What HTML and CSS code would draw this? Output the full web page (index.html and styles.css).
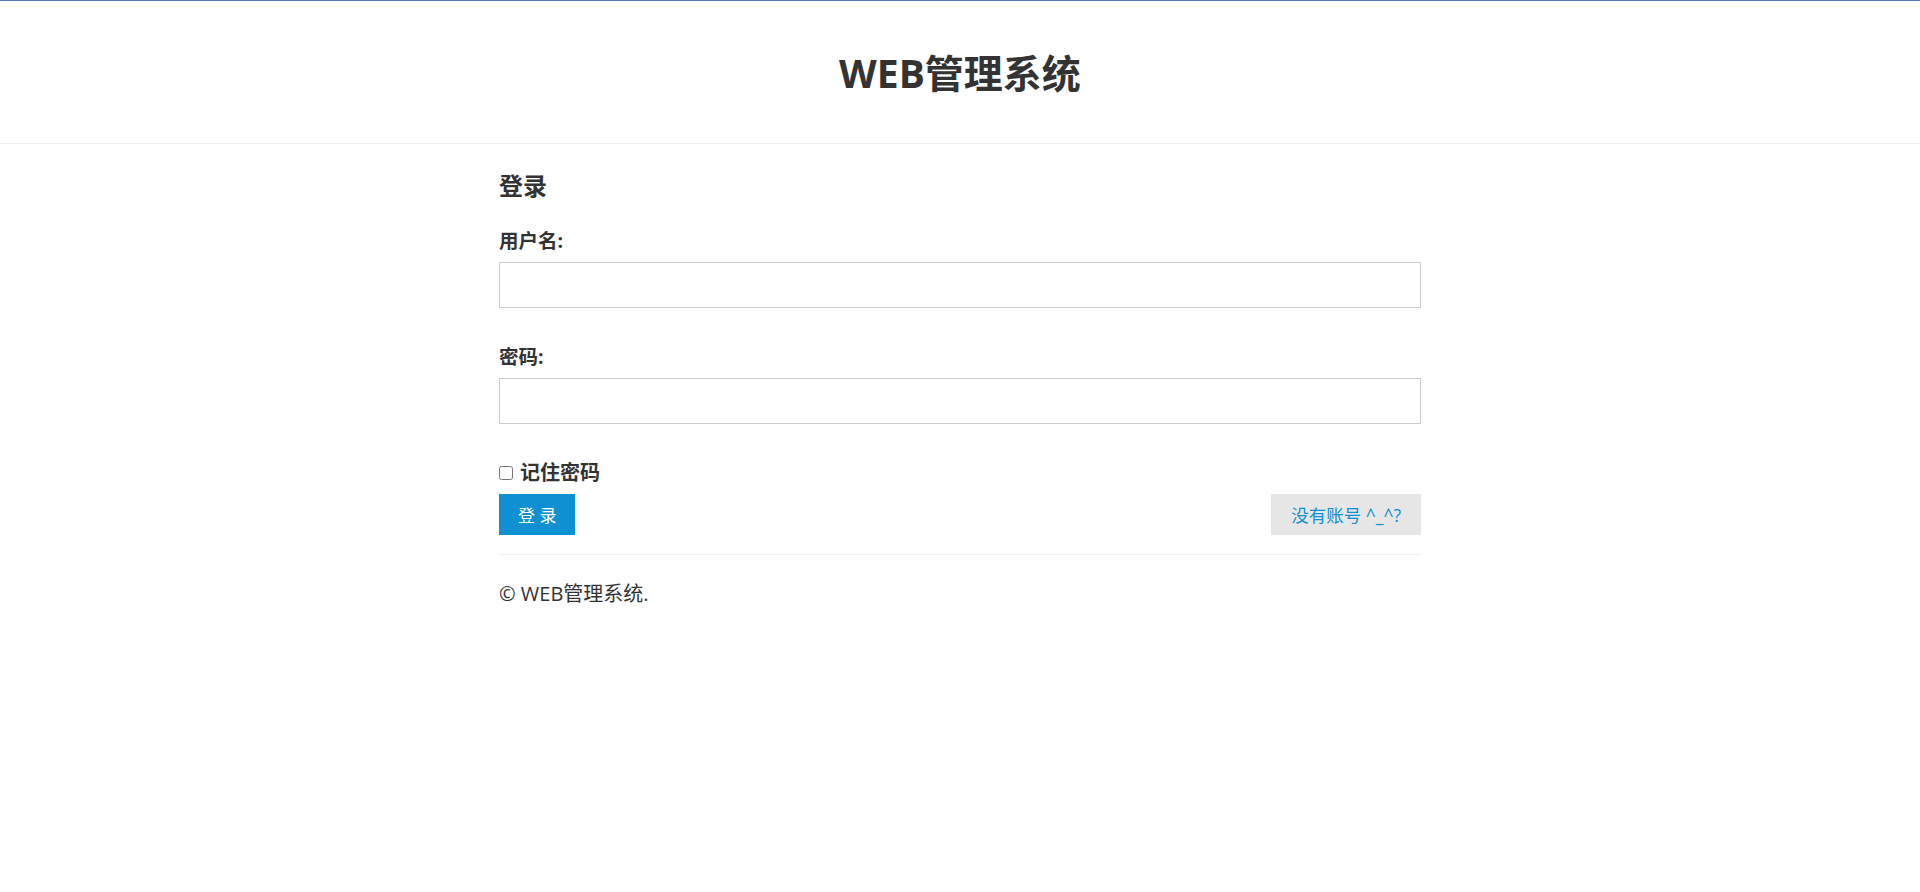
FILE: index.html
```html
<!DOCTYPE html>
<html lang="zh-CN">
  <head>
    <meta charset="UTF-8" />
    <meta name="viewport" content="width=device-width, initial-scale=1.0" />
    <title>WEB管理系统 - 登录</title>
    <link rel="stylesheet" href="styles.css">
  </head>
  <body>
    <div class="header">
      <h1>WEB管理系统</h1>
    </div>

    <section class="container">
      <h3>登录</h3>

      <form class="login-form" method="post">
        <div class="field">
          <label for="username">用户名:</label>
          <input type="text" id="username" name="username" />
        </div>

        <div class="field">
          <label for="password">密码:</label>
          <input type="password" id="password" name="password" />
        </div>

        <label class="remember" for="remember-me">
          <input type="checkbox" id="remember-me" />
          记住密码
        </label>

        <div class="actions">
          <button type="submit" class="btn btn-primary">登 录</button>
          <button type="button" class="btn btn-default">没有账号 ^_^?</button>
        </div>
      </form>

      <hr />
      <p class="copyright">© WEB管理系统.</p>
    </section>
  </body>
</html>
```

FILE: styles.css
```css
body {
  margin: 0;
  border-top: 1px solid #4a7db9;
  font-family: "Open Sans", "Noto Sans CJK SC", sans-serif;
  color: #333;
  background: #fff;
}

/* 顶部标题 */
.header {
  text-align: center;
  padding: 48px 0 47px;
  border-bottom: 1px solid #eee;
}
.header h1 {
  margin: 0;
  font-size: 39px;
  line-height: 47px;
  font-weight: 700;
}

.container {
  width: 922px;
  margin: 0 auto;
}
.container h3 {
  margin: 27px 0 0;
  font-size: 24px;
  line-height: 29px;
  font-weight: 700;
}

/* 表单 */
.login-form {
  margin-top: 29px;
}
.field {
  margin-bottom: 37px;
}
.field label {
  display: block;
  font-size: 19.5px;
  line-height: 23px;
  font-weight: 700;
  margin-bottom: 10px;
}
.field input {
  display: block;
  box-sizing: border-box;
  width: 100%;
  height: 46px;
  margin: 0;
  padding: 0 12px;
  border: 1px solid #ccc;
  font-size: 17px;
  outline: none;
}

.remember {
  display: flex;
  align-items: center;
  margin-top: 1px;
  font-size: 20px;
  line-height: 23px;
  font-weight: 700;
}
.remember input {
  width: 14px;
  height: 14px;
  margin: 0 7px 0 0;
}

.actions {
  display: flex;
  justify-content: space-between;
  margin-top: 10px;
}
.btn {
  height: 41px;
  padding: 0 19px;
  border: none;
  font-family: inherit;
  font-size: 17px;
  cursor: pointer;
}
.btn-primary {
  background-color: #0e90d2;
  color: #fff;
}
.btn-default {
  padding: 0 20px;
  background-color: #e6e6e6;
  color: #0e90d2;
  font-size: 17.5px;
}

hr {
  margin: 19px 0 0;
  border: none;
  border-top: 1px solid #eee;
}
.copyright {
  margin: 27px 0 0;
  font-size: 20px;
  line-height: 23px;
}
```
